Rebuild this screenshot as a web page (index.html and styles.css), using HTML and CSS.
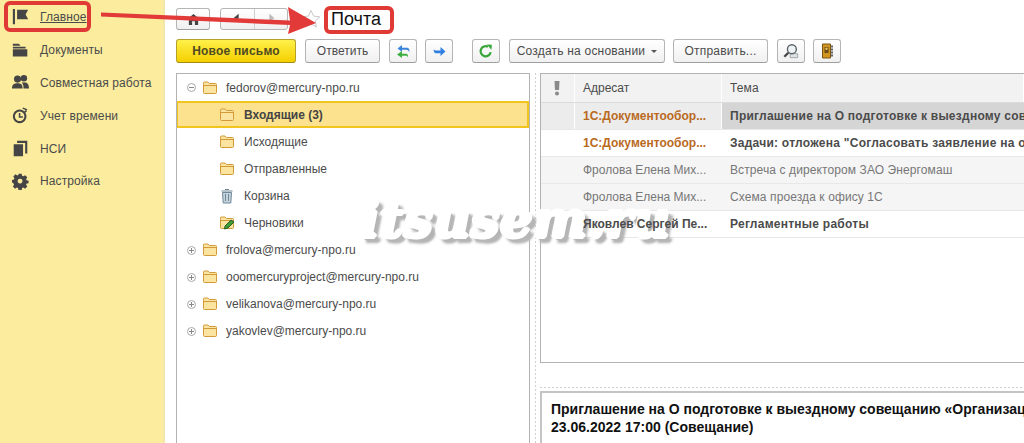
FILE: index.html
```html
<!DOCTYPE html>
<html lang="ru">
<head>
    <meta charset="UTF-8">
    <title>Почта</title>
    <link rel="stylesheet" href="styles.css">
</head>
<body>
    <!-- Левое меню разделов -->
    <nav class="sidebar">
        <a class="side-item side-active">
            <svg class="side-icon" viewBox="0 0 20 20"><path d="M1 0h2.500v18H1zM6 1h13l-3 5.500 3 5.500H6z"/></svg>
            <span>Главное</span>
        </a>
        <a class="side-item">
            <svg class="side-icon" viewBox="0 0 20 20"><path d="M1 2h7l2 2.500H1zM1 5.500h15v2H1zM1 8.500h17V17H1z"/></svg>
            <span>Документы</span>
        </a>
        <a class="side-item">
            <svg class="side-icon" viewBox="0 0 20 20"><circle cx="6.500" cy="6" r="4.200"/><circle cx="14" cy="5" r="3.800"/><path d="M0 17c0-5 3-6 6.500-6s6 1 6 6zM13.500 17v-2c0-2-1-3.500-2-5h3.500c3 0 5 2 5 7z"/></svg>
            <span>Совместная работа</span>
        </a>
        <a class="side-item">
            <svg class="side-icon" viewBox="0 0 20 20"><path fill-rule="evenodd" d="M9 3a8 8 0 1 0 .01 0zm0 2.400a5.600 5.600 0 1 1-.01 0z"/><path d="M8 7h1.800v3.800h3v1.800H8zM13 .5l5 2-.7 1.700-5-2zM16 3.500l1.600 1.400-1.800 2-1.600-1.400z"/></svg>
            <span>Учет времени</span>
        </a>
        <a class="side-item">
            <svg class="side-icon" viewBox="0 0 20 20"><path d="M2 5h11v14H2zM6 1h12v15h-2.500V3.500H6z"/></svg>
            <span>НСИ</span>
        </a>
        <a class="side-item">
            <svg class="side-icon" viewBox="0 0 20 20"><path fill-rule="evenodd" d="M8 1h4l.5 2.500 1.500.6 2.200-1.400 2.700 2.700-1.400 2.200.6 1.500 2.400.5v3l-2.400.5-.6 1.500 1.400 2.200-2.700 2.700-2.200-1.400-1.500.6-.5 2.300H8l-.5-2.300-1.500-.6-2.200 1.400-2.700-2.700 1.400-2.200-.6-1.500L0 11.600v-3l2.400-.5.6-1.500-1.400-2.200 2.700-2.700 2.200 1.400 1.500-.6zM10 7a3 3 0 1 0 .01 0z" transform="scale(.95)"/></svg>
            <span>Настройка</span>
        </a>
    </nav>

    <main class="content">
        <!-- Заголовок формы -->
        <div class="title-row">
            <button class="btn btn-home">
                <svg width="13" height="13" viewBox="0 0 14 14"><path fill="#444" d="M7 1 0 7h2v6h3.500V9h3v4H12V7h2z"/></svg>
            </button>
            <div class="nav-group">
                <button class="btn-nav">
                    <svg width="10" height="10" viewBox="0 0 10 12"><path fill="#444" d="M7 1v10L1 6z"/></svg>
                </button>
                <button class="btn-nav">
                    <svg width="10" height="10" viewBox="0 0 10 12"><path fill="#bbb" d="M3 1v10l6-5z"/></svg>
                </button>
            </div>
            <svg class="star" width="20" height="20" viewBox="0 0 20 20"><path fill="#fff" stroke="#c9c9c9" d="m10 1.500 2.600 5.600 6 .7-4.400 4.200 1.200 6L10 15l-5.400 3 1.200-6L1.400 7.800l6-.7z"/></svg>
            <h1 class="page-title">Почта</h1>
        </div>

        <!-- Командная панель -->
        <div class="toolbar">
            <button class="btn btn-primary">Новое письмо</button>
            <button class="btn btn-reply">Ответить</button>
            <button class="btn btn-icon">
                <svg width="15" height="15" viewBox="0 0 15 15"><path fill="#3a86dc" d="M6 1 1.500 4.500 6 8V5.800h4.500c1.500 0 2.500 1 2.500 2.700 1.200-3-.2-4.800-2.500-4.800H6z"/><path fill="#3cb043" d="M6 7 1 10.500 6 14v-2.200h4.500c.8 0 1 .7 1 2 1-2.300.3-4.100-1.500-4.100H6z"/></svg>
            </button>
            <button class="btn btn-icon btn-forward">
                <svg width="13" height="11" viewBox="0 0 13 11"><path fill="#2f80e0" d="M7.500 1 12.500 5.500 7.500 10V7.300H3C1.500 7.300.7 6 .5 3.600c.8.700 1.600 1 2.500 1h4.500z"/></svg>
            </button>
            <button class="btn btn-icon btn-refresh">
                <svg width="14" height="14" viewBox="0 0 18 18"><path fill="none" stroke="#37a537" stroke-width="2.800" d="M15 10.500A6.500 6.500 0 1 1 11.500 3.500"/><path fill="#37a537" d="M10 .5 16.500 1 16 7.500z"/></svg>
            </button>
            <button class="btn btn-create">Создать на основании <i class="caret"></i></button>
            <button class="btn btn-send">Отправить...</button>
            <button class="btn btn-icon">
                <svg width="16" height="16" viewBox="0 0 18 18"><path fill="#dfe3e5" stroke="#9aa2a6" d="M8 12h8.500v4.500H8z"/><circle cx="10" cy="7" r="5" fill="#eef2f4" stroke="#5a6468" stroke-width="1.600"/><path stroke="#444" stroke-width="2.600" d="M6 11 1.500 15.500"/></svg>
            </button>
            <button class="btn btn-icon btn-book">
                <svg width="13" height="16" viewBox="0 0 13 16"><path fill="#d0961f" stroke="#7a5410" d="M1.500 1h8v14h-8z"/><path fill="#6b4c14" d="M3.500 4h4v6h-4z"/><circle cx="5.500" cy="5.800" r="1.200" fill="#e8c565"/><path fill="#666" d="M10 2.500h2v2h-2zm0 3h2v2h-2zm0 3h2v2h-2zm0 3h2v2h-2z"/></svg>
            </button>
        </div>

        <div class="panels">
            <!-- Дерево папок -->
            <div class="tree">
                <div class="tree-row">
                    <i class="toggle toggle-open"></i>
                    <svg class="folder"><use href="#folder"/></svg>
                    <span>fedorov@mercury-npo.ru</span>
                </div>
                <div class="tree-row tree-child tree-selected">
                    <svg class="folder"><use href="#folder"/></svg>
                    <span>Входящие (3)</span>
                </div>
                <div class="tree-row tree-child">
                    <svg class="folder"><use href="#folder"/></svg>
                    <span>Исходящие</span>
                </div>
                <div class="tree-row tree-child">
                    <svg class="folder"><use href="#folder"/></svg>
                    <span>Отправленные</span>
                </div>
                <div class="tree-row tree-child">
                    <svg class="folder" viewBox="0 0 16 16"><path fill="#c5d3dd" stroke="#6f8796" d="M3.500 4.500h9l-.7 10.500H4.200z"/><path stroke="#6f8796" d="M2.500 3h11M6.500 6v7M9.500 6v7M6 1.500h4"/></svg>
                    <span>Корзина</span>
                </div>
                <div class="tree-row tree-child">
                    <svg class="folder" viewBox="0 0 16 16"><use href="#folder"/><path fill="#3f9c35" stroke="#2c5f2a" d="m6 11 6-6 3 2-6 6-3.500 1z"/></svg>
                    <span>Черновики</span>
                </div>
                <div class="tree-row">
                    <i class="toggle toggle-closed"></i>
                    <svg class="folder"><use href="#folder"/></svg>
                    <span>frolova@mercury-npo.ru</span>
                </div>
                <div class="tree-row">
                    <i class="toggle toggle-closed"></i>
                    <svg class="folder"><use href="#folder"/></svg>
                    <span>ooomercuryproject@mercury-npo.ru</span>
                </div>
                <div class="tree-row">
                    <i class="toggle toggle-closed"></i>
                    <svg class="folder"><use href="#folder"/></svg>
                    <span>velikanova@mercury-npo.ru</span>
                </div>
                <div class="tree-row">
                    <i class="toggle toggle-closed"></i>
                    <svg class="folder"><use href="#folder"/></svg>
                    <span>yakovlev@mercury-npo.ru</span>
                </div>
            </div>

            <div class="splitter"></div>

            <div class="right-col">
                <!-- Список писем -->
                <div class="mail-list">
                    <div class="mail-row mail-head">
                        <div class="cell cell-flag">
                            <svg width="8" height="16" viewBox="0 0 8 16"><path fill="#8a8a8a" d="M1.500 1h5L6 10H2z"/><circle cx="4" cy="13.500" r="2" fill="#8a8a8a"/></svg>
                        </div>
                        <div class="cell cell-from">Адресат</div>
                        <div class="cell cell-subject">Тема</div>
                    </div>
                    <div class="mail-row mail-current mail-bold">
                        <div class="cell cell-flag"></div>
                        <div class="cell cell-from mail-orange">1С:Документообор...</div>
                        <div class="cell cell-subject cell-current">Приглашение на О подготовке к выездному совещанию «Организация</div>
                    </div>
                    <div class="mail-row mail-bold">
                        <div class="cell cell-flag"></div>
                        <div class="cell cell-from mail-orange">1С:Документообор...</div>
                        <div class="cell cell-subject">Задачи: отложена "Согласовать заявление на отпуск"</div>
                    </div>
                    <div class="mail-row mail-read">
                        <div class="cell cell-flag"></div>
                        <div class="cell cell-from">Фролова Елена Мих...</div>
                        <div class="cell cell-subject">Встреча с директором ЗАО Энергомаш</div>
                    </div>
                    <div class="mail-row mail-read">
                        <div class="cell cell-flag"></div>
                        <div class="cell cell-from">Фролова Елена Мих...</div>
                        <div class="cell cell-subject">Схема проезда к офису 1С</div>
                    </div>
                    <div class="mail-row mail-bold mail-over">
                        <div class="cell cell-flag"></div>
                        <div class="cell cell-from">Яковлев Сергей Пе...</div>
                        <div class="cell cell-subject">Регламентные работы</div>
                    </div>
                </div>

                <div class="hsplit"></div>

                <!-- Просмотр письма -->
                <div class="preview">
                    <p>Приглашение на О подготовке к выездному совещанию «Организация поездки»</p>
                    <p>23.06.2022 17:00 (Совещание)</p>
                </div>
            </div>
        </div>
    </main>

    <!-- Пометки поверх скриншота -->
    <div class="mark mark-home"></div>
    <div class="mark mark-title"></div>
    <svg class="arrow" width="330" height="40" viewBox="0 0 330 40">
        <path fill="#e23a38" d="M101 12.500 290 20.500 288 7 316 23 288 34 290 25 101 16.500z"/>
    </svg>
    <div class="watermark">itsusem.ru</div>

    <svg class="defs" width="0" height="0">
        <symbol id="folder" viewBox="0 0 16 16">
            <path fill="#fbe3a0" stroke="#d39a3a" d="M1.500 4.500V3c0-.5.300-1 1-1h3.500l1.500 1.500h6c.6 0 1 .4 1 1v8c0 .6-.4 1-1 1h-11c-.6 0-1-.4-1-1z"/>
            <path fill="none" stroke="#d39a3a" d="M1.500 5.500h13"/>
        </symbol>
    </svg>
</body>
</html>
```

FILE: styles.css
```css
/* Общие стили */
html, body {
    height: 100%;
}

body {
    margin: 0;
    display: flex;
    overflow: hidden;
    background-color: #fff;
    font-family: "Liberation Sans", Arial, sans-serif;
    font-size: 12px;
    color: #4b4b4b;
    position: relative;
}

button {
    font-family: inherit;
    font-size: 12px;
    color: #4b4b4b;
}

/* Левое меню */
.sidebar {
    width: 163px;
    flex-shrink: 0;
    background-color: #fbec9e;
    border-right: 2px solid #f3e6a8;
    padding-top: 1px;
}

.side-item {
    height: 32.800px;
    display: flex;
    align-items: center;
    padding-left: 12px;
    gap: 11px;
    font-size: 12px;
    letter-spacing: 0.1px;
}

.side-icon {
    width: 17px;
    height: 17px;
    fill: #454545;
    flex-shrink: 0;
}

.side-active span {
    text-decoration: underline;
}

/* Основная часть */
.content {
    flex: 1;
    min-width: 0;
    padding: 8px 0 0 11px;
    display: flex;
    flex-direction: column;
}

.title-row {
    display: flex;
    align-items: center;
    height: 22px;
}

.btn {
    height: 24px;
    border: 1px solid #b5b5b5;
    border-bottom-color: #9f9f9f;
    border-radius: 3px;
    background: linear-gradient(#ffffff, #f0f0f0);
    padding: 0;
    display: flex;
    align-items: center;
    justify-content: center;
    flex-shrink: 0;
}

.btn-home {
    width: 34px;
    height: 22px;
    margin-right: 10px;
}

.nav-group {
    display: flex;
    width: 68px;
    height: 22px;
    border: 1px solid #b5b5b5;
    border-radius: 3px;
    box-sizing: border-box;
    background: linear-gradient(#ffffff, #f0f0f0);
}

.btn-nav {
    flex: 1;
    border: none;
    background: none;
    padding: 0;
}

.btn-nav + .btn-nav {
    border-left: 1px solid #cfcfcf;
}

.star {
    margin-left: 13px;
}

.page-title {
    margin: 0 0 0 10px;
    font-size: 18px;
    font-weight: normal;
    color: #111;
}

.toolbar {
    display: flex;
    align-items: center;
    margin-top: 9px;
    height: 24px;
}

.btn-primary {
    width: 120px;
    margin-right: 9px;
    border-color: #b5a12a;
    border-bottom-color: #a28d14;
    background: linear-gradient(#fff04a, #f4cf00);
    font-weight: bold;
    color: #514a20;
    letter-spacing: 0.2px;
}

.btn-reply {
    width: 75px;
    margin-right: 9px;
}

.btn-icon {
    width: 28px;
    margin-right: 8px;
}

.btn-forward {
    margin-right: 19px;
}

.btn-refresh {
    margin-right: 9px;
}

.btn-create {
    width: 156px;
    margin-right: 8px;
    gap: 6px;
    letter-spacing: 0.2px;
}

.btn-send {
    width: 95px;
    margin-right: 9px;
    letter-spacing: 0.2px;
}

.btn-book {
    margin-right: 0;
}

.caret {
    width: 0;
    height: 0;
    border-left: 3px solid transparent;
    border-right: 3px solid transparent;
    border-top: 3px solid #555;
}

/* Панели */
.panels {
    flex: 1;
    min-height: 0;
    display: flex;
    margin-top: 10px;
}

.tree {
    width: 354px;
    flex-shrink: 0;
    box-sizing: border-box;
    border: 1px solid #b2b2b2;
    border-bottom: none;
    background-color: #fff;
}

.tree-row {
    height: 27.100px;
    display: flex;
    align-items: center;
    padding-left: 10px;
    box-sizing: border-box;
    white-space: nowrap;
}

.tree-child {
    padding-left: 42px;
}

.tree-child .folder {
    margin-right: 9px;
}

.tree-selected {
    background-color: #fce28e;
    border: 1px solid #f2c41f;
    border-width: 2px 2px 2px 1px;
    padding-left: 41px;
    font-weight: bold;
    color: #444;
}

.toggle {
    width: 7px;
    height: 7px;
    border: 1px solid #a9a9a9;
    border-radius: 50%;
    margin-right: 6px;
    flex-shrink: 0;
    position: relative;
}

.toggle::before {
    content: "";
    position: absolute;
    left: 1px;
    top: 3px;
    width: 5px;
    height: 1px;
    background-color: #888;
}

.toggle-closed::after {
    content: "";
    position: absolute;
    left: 3px;
    top: 1px;
    width: 1px;
    height: 5px;
    background-color: #888;
}

.folder {
    width: 16px;
    height: 16px;
    margin-right: 8px;
    flex-shrink: 0;
}

.splitter {
    width: 10px;
    flex-shrink: 0;
    background-image: linear-gradient(#cfcfcf 50%, transparent 50%);
    background-size: 1px 4px;
    background-repeat: repeat-y;
    background-position: 5px 0;
}

.right-col {
    flex: 1;
    min-width: 0;
    display: flex;
    flex-direction: column;
}

/* Список писем */
.mail-list {
    height: 290px;
    flex-shrink: 0;
    box-sizing: border-box;
    border: 1px solid #b2b2b2;
    border-right: none;
    overflow: hidden;
}

.mail-row {
    display: flex;
    height: 27px;
    box-sizing: border-box;
    align-items: stretch;
    border-bottom: 1px solid #e8e8e8;
}

.mail-head {
    height: 29px;
    background-color: #f2f2f2;
    border-bottom: 1px solid #dcdcdc;
}

.cell {
    display: flex;
    align-items: center;
    box-sizing: border-box;
    padding-left: 8px;
    white-space: nowrap;
}

.mail-head .cell,
.mail-current .cell {
    border-right: 1px solid #fff;
}

.cell-flag {
    width: 34px;
    flex-shrink: 0;
    padding-left: 12px;
}

.cell-from {
    width: 147px;
    flex-shrink: 0;
}

.cell-subject {
    flex: 1;
    min-width: 0;
    overflow: hidden;
    letter-spacing: 0.1px;
}

.mail-current {
    background-color: #ececec;
}

.mail-current .cell-current {
    background-color: #d5d5d5;
    border-right: none;
}

.mail-bold {
    font-weight: bold;
}

.mail-bold .cell-subject {
    letter-spacing: 0.25px;
}

.mail-orange {
    color: #b96a1e;
}

.mail-read {
    color: #777;
    background-color: #f5f5f5;
}

/* Текст этой строки лежит поверх водяного знака */
.mail-over .cell {
    position: relative;
    z-index: 2;
}

.hsplit {
    height: 25px;
    flex-shrink: 0;
    background-image: linear-gradient(90deg, #cfcfcf 50%, transparent 50%);
    background-size: 4px 1px;
    background-repeat: repeat-x;
    background-position: 0 bottom;
}

.preview {
    flex: 1;
    border-top: 2px solid #c4c4c4;
    border-left: 2px solid #c4c4c4;
    margin-top: 3px;
    padding: 7px 0 0 9px;
    overflow: hidden;
    white-space: nowrap;
    font-size: 14px;
    font-weight: bold;
    line-height: 18px;
    color: #111;
}

.preview p {
    margin: 0;
}

/* Пометки */
.mark {
    position: absolute;
    box-sizing: border-box;
    border: 4px solid #e03a36;
    border-radius: 6px;
}

.mark-home {
    left: 4px;
    top: 1px;
    width: 87px;
    height: 31px;
}

.mark-title {
    left: 324px;
    top: 6px;
    width: 70px;
    height: 28px;
}

.arrow {
    position: absolute;
    left: 0;
    top: 0;
}

/* Белая толщина набрана тенями, серая тень лежит под ними */
.watermark {
    position: absolute;
    z-index: 1;
    left: 360px;
    top: 187px;
    font-family: "DejaVu Serif", serif;
    font-style: italic;
    font-weight: bold;
    font-size: 51px;
    line-height: 64px;
    letter-spacing: 0.5px;
    color: #fff;
    text-shadow:
        1px 0 #fff, -1px 0 #fff, 0 1px #fff, 0 -1px #fff,
        2px 0 #fff, -2px 0 #fff, 0 2px #fff, 0 -2px #fff,
        1px 1px #fff, -1px -1px #fff, 1px -1px #fff, -1px 1px #fff,
        3px 3px 1px #b5b5b5, 5px 5px 2px #b5b5b5, 4px 6px 3px #bdbdbd, 6px 4px 3px #bdbdbd;
    white-space: nowrap;
}

.defs {
    position: absolute;
}
```
